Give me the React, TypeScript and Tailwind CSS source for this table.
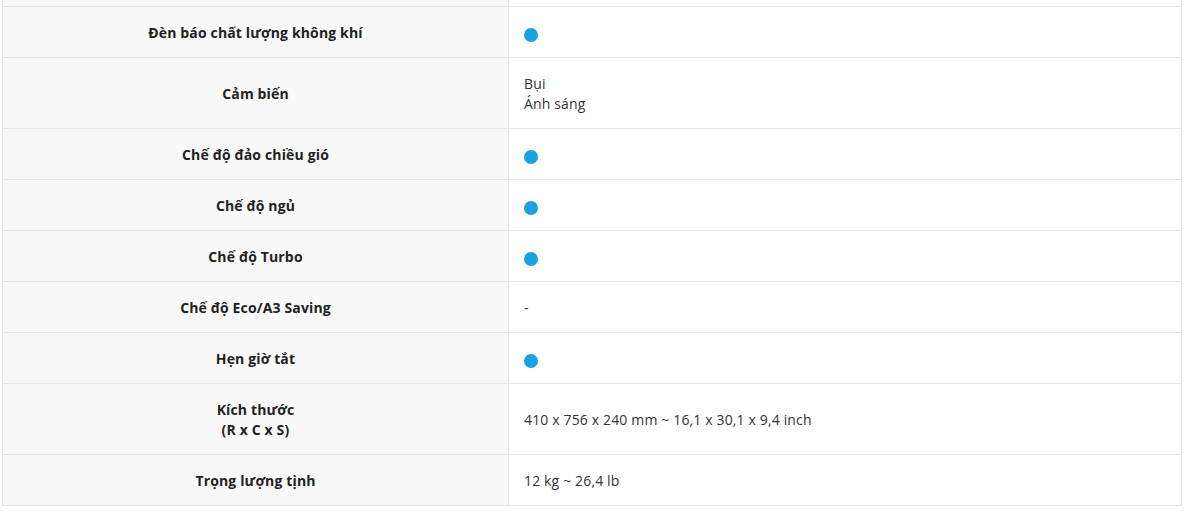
import React from 'react';

type Row = { label: React.ReactNode; value: React.ReactNode; tall?: boolean };

const Dot = () => <span className="block w-[14px] h-[14px] mt-[4px] rounded-full bg-[#1ba1e2]" />;

const ROWS: Row[] = [
  { label: 'Đèn báo chất lượng không khí', value: <Dot /> },
  {
    label: 'Cảm biến',
    value: (
      <>
        <div>Bụi</div>
        <div>Ánh sáng</div>
      </>
    ),
    tall: true,
  },
  { label: 'Chế độ đảo chiều gió', value: <Dot /> },
  { label: 'Chế độ ngủ', value: <Dot /> },
  { label: 'Chế độ Turbo', value: <Dot /> },
  { label: 'Chế độ Eco/A3 Saving', value: '-' },
  { label: 'Hẹn giờ tắt', value: <Dot /> },
  {
    label: (
      <>
        <div>Kích thước</div>
        <div>(R x C x S)</div>
      </>
    ),
    value: '410 x 756 x 240 mm ~ 16,1 x 30,1 x 9,4 inch',
    tall: true,
  },
  { label: 'Trọng lượng tịnh', value: '12 kg ~ 26,4 lb' },
];

const SpecRow = ({ row }: { row: Row }) => (
  <div className="flex border-t border-[#e5e5e5]">
    <div className="w-[506px] shrink-0 bg-[#f8f8f8] border-r border-[#e5e5e5] flex items-center justify-center text-center font-bold text-[#222] pt-[16px] pb-[14px]">
      <div>{row.label}</div>
    </div>
    <div className="flex-1 flex items-center pl-[15px] text-[#333] pt-[16px] pb-[14px]">
      <div>{row.value}</div>
    </div>
  </div>
);

export default function App() {
  return (
    <div className="bg-white w-[1187px] h-[512px] overflow-hidden text-[14px] leading-[20px] tracking-[0.15px]" style={{ fontFamily: '"Open Sans", "Noto Sans", sans-serif' }}>
      <div className="ml-[2px] w-[1180px] border-x border-b border-[#e5e5e5]">
        <div className="flex h-[6px]">
          <div className="w-[506px] bg-[#f8f8f8] border-r border-[#e5e5e5]" />
          <div className="flex-1" />
        </div>
        {ROWS.map((r, i) => (
          <SpecRow key={i} row={r} />
        ))}
      </div>
    </div>
  );
}
